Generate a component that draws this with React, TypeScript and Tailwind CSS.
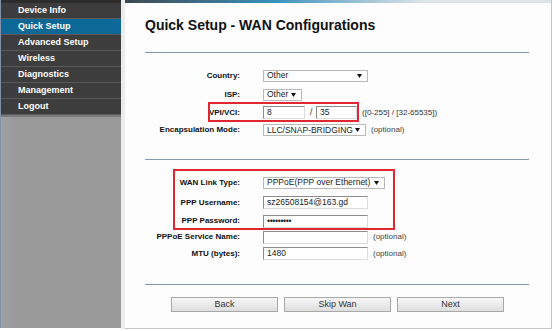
import React from "react";

const Arrow = () => (
  <svg width="5" height="4" viewBox="0 0 5 4" className="shrink-0">
    <polygon points="0,0 5,0 2.5,4" fill="#111" />
  </svg>
);

const Select = ({ text, className }: { text: string; className: string }) => (
  <div
    className={`flex h-[12px] items-center justify-between border border-[#b9b9b9] bg-white pl-[3px] pr-[5px] text-[8.5px] leading-none text-[#222] ${className}`}
  >
    <span>{text}</span>
    <Arrow />
  </div>
);

const Input = ({ text, className }: { text: string; className: string }) => (
  <div
    className={`flex h-[13px] items-center border border-t-[#8c8c8c] border-l-[#8c8c8c] border-r-[#dcdcdc] border-b-[#dcdcdc] bg-white pl-[3px] text-[8.5px] leading-none text-[#222] ${className}`}
  >
    {text}
  </div>
);

const Row = ({
  label,
  h,
  children,
  extra,
}: {
  label: string;
  h: string;
  children: React.ReactNode;
  extra?: React.ReactNode;
}) => (
  <div className={`relative flex items-center ${h}`}>
    <div className="w-[95px] text-right text-[8px] font-bold leading-none text-[#111]">{label}</div>
    <div className="ml-[23px] flex items-center">{children}</div>
    {extra}
  </div>
);

const Optional = () => <span className="ml-[5px] text-[8px] leading-none text-[#444]">(optional)</span>;

const Button = ({ text }: { text: string }) => (
  <div className="flex h-[15px] w-[107px] items-center justify-center border border-[#a8a8a8] bg-gradient-to-b from-[#f7f7f7] to-[#dedede] text-[9px] leading-none text-[#333]">
    {text}
  </div>
);

const menu = ["Device Info", "Quick Setup", "Advanced Setup", "Wireless", "Diagnostics", "Management", "Logout"];

export default function App() {
  return (
    <div
      className="flex h-[331px] w-[554px] bg-white"
      style={{ fontFamily: '"Liberation Sans", Arial, sans-serif' }}
    >
      {/* Sidebar */}
      <div className="flex h-[328px] w-[121px] flex-col border-l border-[#8090aa] bg-gradient-to-r from-[#a0a0a0] to-[#9a9a9a] to-[10%]">
        <div className="h-[3px] bg-[#2c2c2c]" />
        {menu.map((m, i) => (
          <div
            key={m}
            className={`flex h-[16px] items-center border-b border-[#5a5a5a] pl-[17px] text-[9px] font-bold leading-none text-white ${
              i === 1 ? "bg-[#0c6897]" : "bg-[#3d3d3d]"
            }`}
          >
            {m}
          </div>
        ))}
        <div className="h-[2px] bg-[#7a7a7a]" />
      </div>
      <div className="h-[329px] w-[4px] bg-[#ececec]" />
      {/* Main */}
      <div className="flex h-[329px] w-[427px] flex-col border-r border-b border-[#c4c4c4] bg-[#fdfdfd]">
        <div className="h-[3px] bg-gradient-to-r from-[#3b4853] via-[#3592bd] via-[35%] to-[#dde3e6] to-[70%]" />
        <div className="flex flex-col pl-[20px] pr-[22px]">
          <div className="mt-[14px] h-[16px] text-[14px] font-bold leading-[16px] text-[#111]">
            Quick Setup - WAN Configurations
          </div>
          <div className="mt-[19px] h-px bg-[#7f9db0]" />

          <div className="mt-[13px] flex flex-col">
            <Row label="Country:" h="h-[19px]">
              <Select text="Other" className="w-[105px]" />
            </Row>
            <Row label="ISP:" h="h-[19px]">
              <Select text="Other" className="w-[39px] pr-[4px]" />
            </Row>
            <Row
              label="VPI/VCI:"
              h="h-[17px]"
              extra={<div className="absolute left-[63px] top-[-2px] h-[20px] w-[151px] border-2 border-[#e0262e]" />}
            >
              <Input text="8" className="w-[42px]" />
              <span className="ml-[5px] w-[6px] text-[8.5px] leading-none text-[#333]">/</span>
              <Input text="35" className="w-[41px]" />
              <span className="ml-[5px] text-[8px] leading-none text-[#333]">([0-255] / [32-65535])</span>
            </Row>
            <Row label="Encapsulation Mode:" h="h-[18px]">
              <Select text="LLC/SNAP-BRIDGING" className="w-[103px]" />
              <Optional />
            </Row>
          </div>

          <div className="mt-[20px] h-px bg-[#7f9db0]" />

          <div className="relative mt-[13px] flex flex-col">
            <div className="absolute left-[28px] top-[-4px] h-[61px] w-[222px] border-2 border-[#e0262e]" />
            <Row label="WAN Link Type:" h="h-[19px]">
              <Select text="PPPoE(PPP over Ethernet)" className="w-[122px]" />
            </Row>
            <Row label="PPP Username:" h="h-[21px]">
              <Input text="sz26508154@163.gd" className="w-[105px]" />
            </Row>
            <Row label="PPP Password:" h="h-[16px]">
              <Input text="•••••••••" className="w-[105px] tracking-[-0.3px]" />
            </Row>
            <Row label="PPPoE Service Name:" h="h-[16px]">
              <Input text="" className="w-[105px]" />
              <Optional />
            </Row>
            <Row label="MTU (bytes):" h="h-[17px]">
              <Input text="1480" className="w-[105px]" />
              <Optional />
            </Row>
          </div>

          <div className="mt-[22px] h-px bg-[#7f9db0]" />

          <div className="ml-[26px] mt-[12px] flex gap-[6px]">
            <Button text="Back" />
            <Button text="Skip Wan" />
            <Button text="Next" />
          </div>
        </div>
      </div>
    </div>
  );
}
